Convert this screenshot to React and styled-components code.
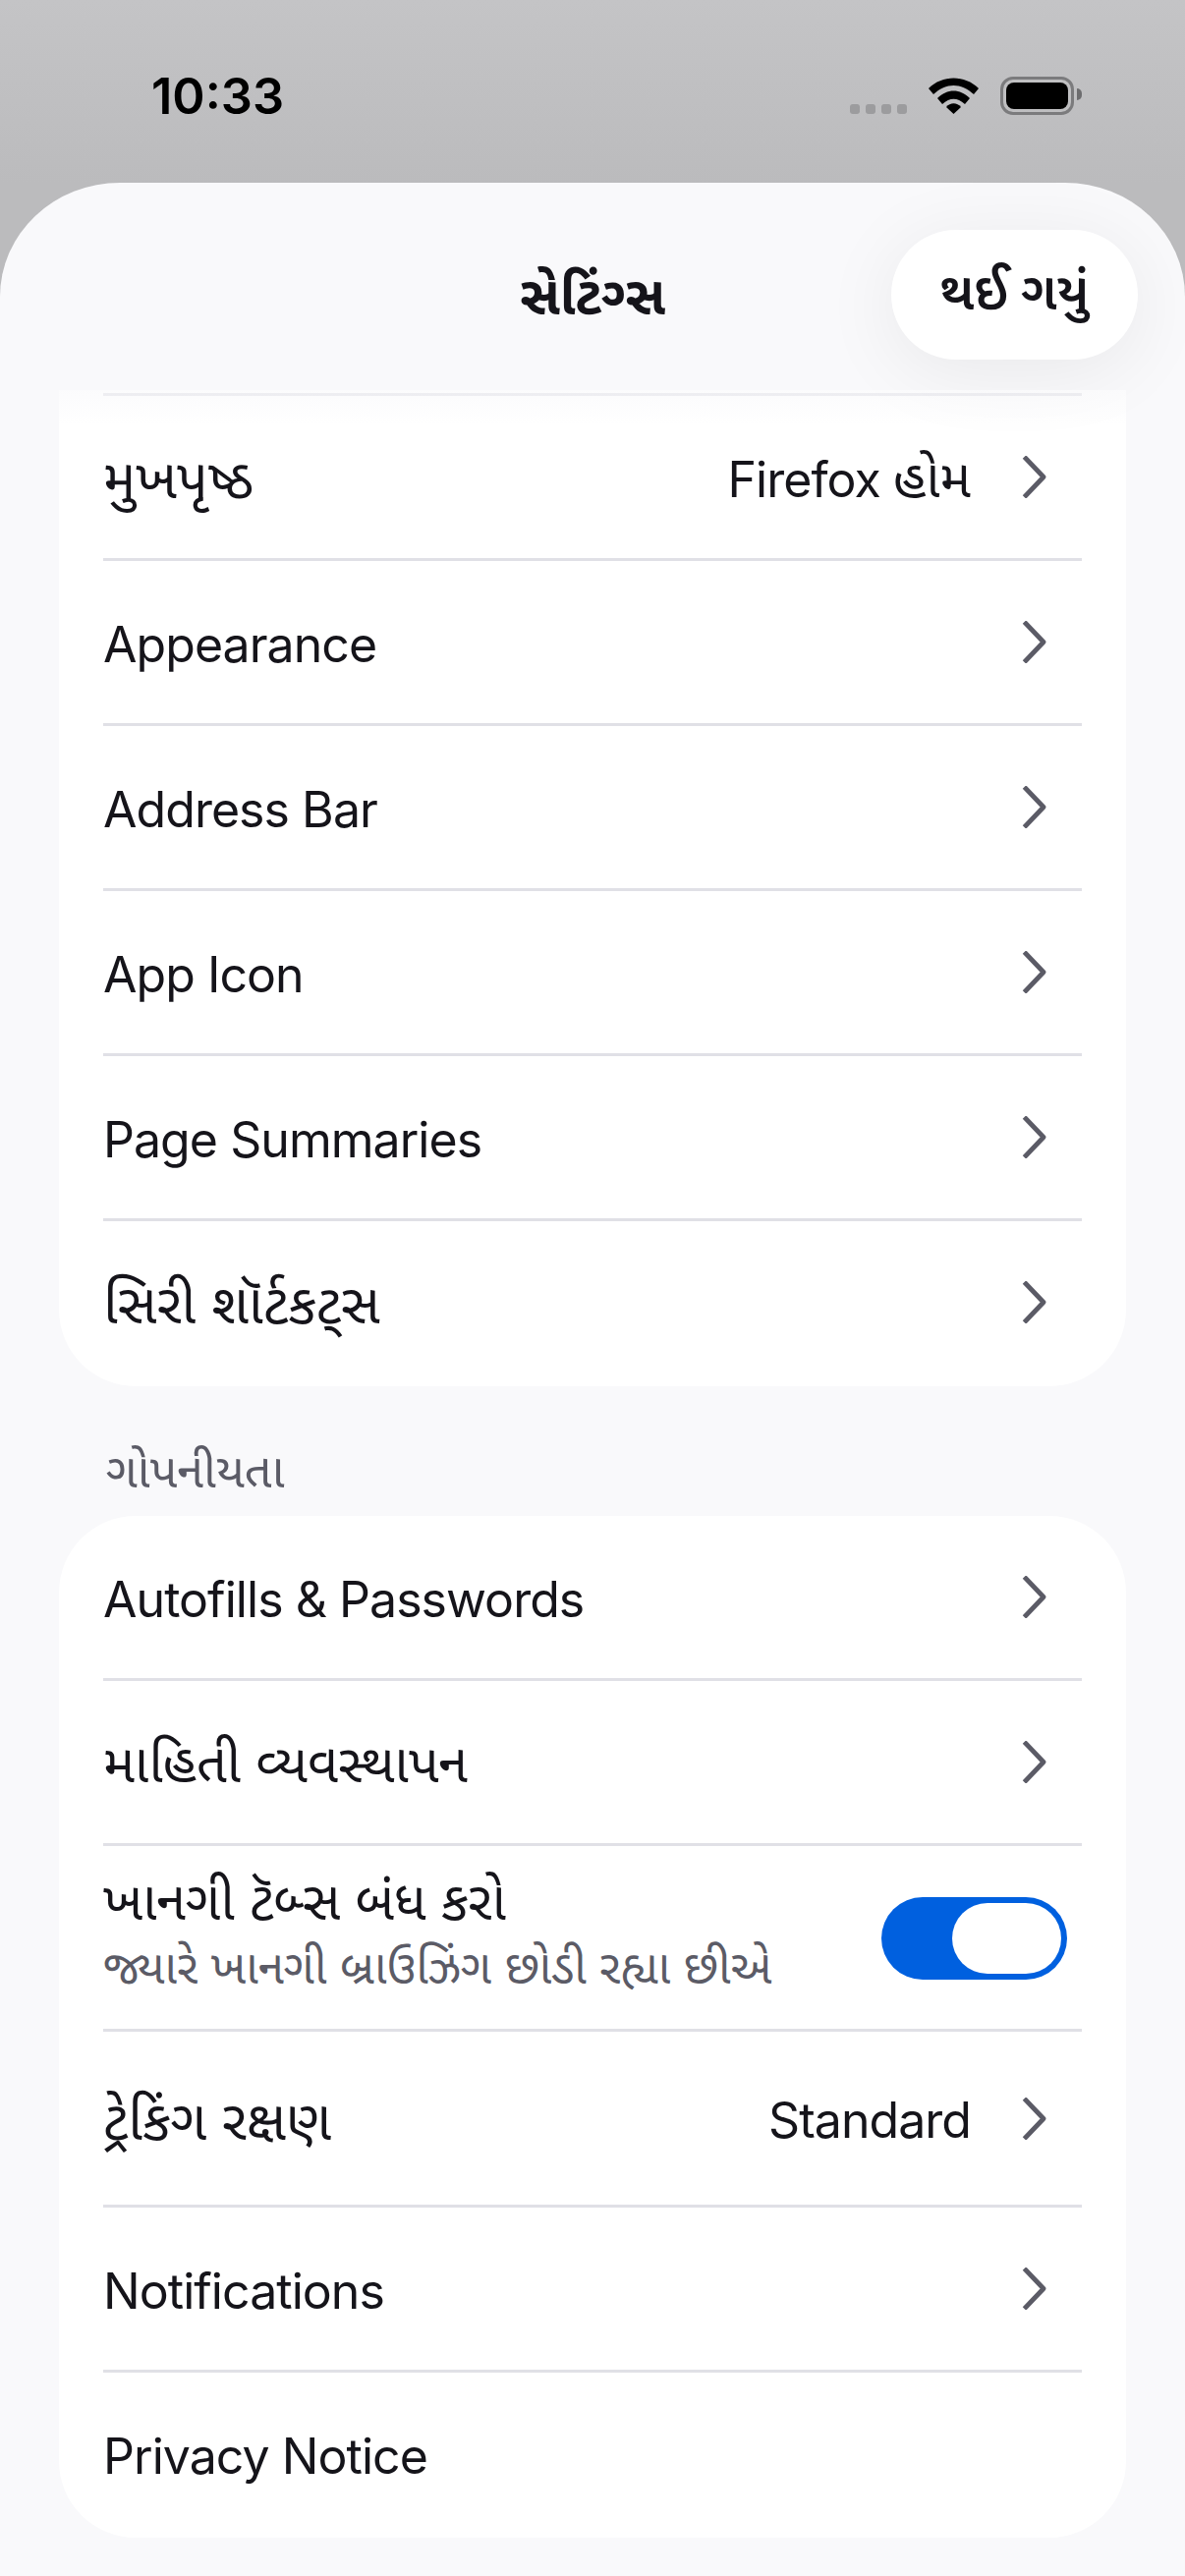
import React from 'react';
import styled, {createGlobalStyle} from "styled-components";

const firstGroup = [
    {label: "મુખપૃષ્ઠ", gu: true, value: "Firefox", valueGu: "હોમ"},
    {label: "Appearance"},
    {label: "Address Bar"},
    {label: "App Icon"},
    {label: "Page Summaries"},
    {label: "સિરી શૉર્ટકટ્સ", gu: true},
];

const Chevron = () => (
    <ChevronIcon viewBox="0 0 25 43">
        <path d="M2.5 1 L22 21.5 L2.5 42" fill="none" stroke="#5b5b66" strokeWidth="4.8" strokeLinejoin="round"/>
    </ChevronIcon>
);

const App = () => {
    return (
        <>
            <GlobalStyle/>
            <Screen>
                <StatusBar>
                    <Time>10:33</Time>
                    <StatusIcons>
                        <Signal>
                            <SignalDot/><SignalDot/><SignalDot/><SignalDot/>
                        </Signal>
                        <WifiIcon viewBox="0 0 51 37">
                            <path d="M0 11 C14 -3 37 -3 51 11 L46 17 C33 5 18 5 5 17 Z" fill="#000"/>
                            <path d="M9 21 C19 11 32 11 42 21 L37 27 C29 20 22 20 14 27 Z" fill="#000"/>
                            <path d="M18 30 C22 25 29 25 33 30 L25.5 37 Z" fill="#000"/>
                        </WifiIcon>
                        <Battery>
                            <BatteryFill/>
                        </Battery>
                    </StatusIcons>
                </StatusBar>
                <Sheet>
                    <Header>
                        <HeaderTitle>સેટિંગ્સ</HeaderTitle>
                        <DoneButton>થઈ ગયું</DoneButton>
                    </Header>
                    <Content>
                        <Card $clipped>
                            <TopStub/>
                            {firstGroup.map((row, i) => (
                                <Row key={row.label} $last={i === firstGroup.length - 1}>
                                    <Label $gu={row.gu}>{row.label}</Label>
                                    <RowEnd>
                                        {row.value && <Value>{row.value} <GuText>{row.valueGu}</GuText></Value>}
                                        <Chevron/>
                                    </RowEnd>
                                </Row>
                            ))}
                        </Card>
                        <SectionTitle>ગોપનીયતા</SectionTitle>
                        <Card>
                            <Row>
                                <Label>Autofills &amp; Passwords</Label>
                                <RowEnd><Chevron/></RowEnd>
                            </Row>
                            <Row>
                                <Label $gu $small>માહિતી વ્યવસ્થાપન</Label>
                                <RowEnd><Chevron/></RowEnd>
                            </Row>
                            <Row $height={"189px"}>
                                <LabelStack>
                                    <Label $gu $small>ખાનગી ટૅબ્સ બંધ કરો</Label>
                                    <SubLabel>જ્યારે ખાનગી બ્રાઉઝિંગ છોડી રહ્યા છીએ</SubLabel>
                                </LabelStack>
                                <Toggle>
                                    <ToggleThumb/>
                                </Toggle>
                            </Row>
                            <Row $height={"179px"}>
                                <Label $gu>ટ્રેકિંગ રક્ષણ</Label>
                                <RowEnd>
                                    <Value>Standard</Value>
                                    <Chevron/>
                                </RowEnd>
                            </Row>
                            <Row>
                                <Label>Notifications</Label>
                                <RowEnd><Chevron/></RowEnd>
                            </Row>
                            <Row $last>
                                <Label>Privacy Notice</Label>
                            </Row>
                        </Card>
                    </Content>
                </Sheet>
            </Screen>
        </>
    );
};

const GlobalStyle = createGlobalStyle`
  html, body {
    margin: 0;
    padding: 0;
    background: #f9f9fb;
  }
  * {
    box-sizing: border-box;
  }
`
const Screen = styled.div`
  width: 1206px;
  height: 2622px;
  overflow: hidden;
  display: flex;
  flex-direction: column;
  background: linear-gradient(#c4c4c6 0, #bbbbbd 186px);
  font-family: "Inter", "Noto Sans Gujarati", "Noto Sans", "Liberation Sans", sans-serif;
  color: #15141a;
`
const StatusBar = styled.div`
  height: 186px;
  flex: none;
  display: flex;
  justify-content: space-between;
  padding: 70px 113px 0 154px;
`
const Time = styled.div`
  font-size: 50.5px;
  font-weight: 600;
  line-height: 56px;
  color: #000;
`
const StatusIcons = styled.div`
  display: flex;
  align-items: flex-start;
  padding-top: 8px;
`
const Signal = styled.div`
  display: flex;
  gap: 6px;
  margin-top: 28px;
  margin-right: 22px;
`
const SignalDot = styled.div`
  width: 10px;
  height: 10px;
  border-radius: 3px;
  background: #9c9c9e;
`
const WifiIcon = styled.svg`
  width: 51px;
  height: 37px;
  margin-top: 1px;
  margin-right: 22px;
`
const Battery = styled.div`
  position: relative;
  width: 75px;
  height: 39px;
  border: 3px solid #7b7b7d;
  border-radius: 13px;
  padding: 3px;
  &::after {
    content: "";
    position: absolute;
    right: -11px;
    top: 9px;
    width: 5px;
    height: 12px;
    background: #6d6d6f;
    border-radius: 0 6px 6px 0;
  }
`
const BatteryFill = styled.div`
  width: 100%;
  height: 100%;
  background: #000;
  border-radius: 8px;
`
const Sheet = styled.div`
  flex: 1;
  display: flex;
  flex-direction: column;
  min-height: 0;
  background: #f9f9fb;
  border-radius: 122px 122px 0 0 / 116px 116px 0 0;
`
const Header = styled.div`
  position: relative;
  height: 211px;
  flex: none;
  display: flex;
  align-items: center;
  justify-content: center;
  &::after {
    content: "";
    position: absolute;
    left: 60px;
    right: 60px;
    top: 100%;
    height: 36px;
    background: linear-gradient(rgba(249, 249, 251, 0.62), rgba(249, 249, 251, 0));
    pointer-events: none;
  }
`
const HeaderTitle = styled.div`
  font-size: 54px;
  font-weight: 700;
  margin-top: 26px;
`
const DoneButton = styled.div`
  position: absolute;
  top: 48px;
  right: 48px;
  width: 251px;
  height: 132px;
  display: flex;
  align-items: center;
  justify-content: center;
  border-radius: 66px;
  background: #fff;
  font-size: 52.5px;
  font-weight: 600;
  box-shadow: 0 12px 80px rgba(0, 0, 0, 0.07);
`
const Content = styled.div`
  display: flex;
  flex-direction: column;
  padding: 0 60px;
`
const Card = styled.div`
  background: #fff;
  border-radius: ${(props) => props.$clipped ? "0 0 78px 78px" : "78px"};
  padding: 0 45px;
`
const TopStub = styled.div`
  height: 6px;
  border-bottom: 3px solid #e0e0e6;
`
const Row = styled.div`
  height: ${(props) => props.$height || "168px"};
  display: flex;
  align-items: center;
  justify-content: space-between;
  border-bottom: 3px solid ${(props) => props.$last ? "transparent" : "#e0e0e6"};
`
const Label = styled.div`
  font-size: ${(props) => props.$small ? "54px" : props.$gu ? "56px" : "50px"};
  line-height: 62px;
  letter-spacing: ${(props) => props.$gu ? "0" : "-0.95px"};
  padding-top: ${(props) => props.$gu ? "3px" : "5px"};
`
const LabelStack = styled.div`
  display: flex;
  flex-direction: column;
  gap: 8px;
  margin-top: -14px;
`
const SubLabel = styled.div`
  font-size: 47.6px;
  line-height: 56px;
  color: #5b5b66;
`
const RowEnd = styled.div`
  display: flex;
  align-items: center;
  gap: 52px;
  padding-right: 36px;
`
const Value = styled.div`
  font-size: 50px;
  line-height: 62px;
  letter-spacing: -0.95px;
  padding-top: 3px;
`
const GuText = styled.span`
  font-size: 53px;
  letter-spacing: 0;
`
const ChevronIcon = styled.svg`
  width: 25px;
  height: 43px;
  display: block;
`
const SectionTitle = styled.div`
  height: 132px;
  padding: 56px 0 0 48px;
  font-size: 48.7px;
  line-height: 60px;
  color: #5b5b66;
`
const Toggle = styled.div`
  width: 189px;
  height: 84px;
  margin-right: 15px;
  margin-top: 2px;
  padding: 6px 6px 6px 72px;
  border-radius: 42px;
  background: #0060df;
`
const ToggleThumb = styled.div`
  width: 100%;
  height: 100%;
  border-radius: 36px;
  background: #fff;
`

export default App;
